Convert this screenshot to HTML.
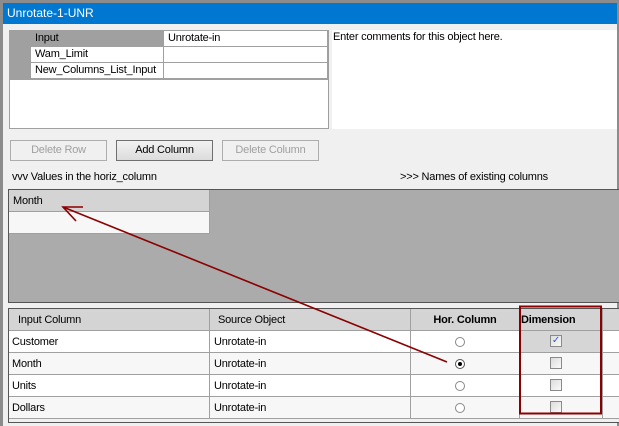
<!DOCTYPE html>
<html><head><style>
*{margin:0;padding:0;box-sizing:border-box}
body{width:619px;height:426px;background:#f0f0f0;font-family:"Liberation Sans",sans-serif;font-size:11px;color:#000;position:relative;overflow:hidden;letter-spacing:-0.2px}
.a{position:absolute}
.btn{position:absolute;top:140px;height:21px;width:97px;border:1px solid #adadad;background:#f0f0f0;color:#a0a0a0;text-align:center;line-height:19px;font-size:11px}
.cell{position:absolute;border-right:1px solid #a0a0a0;border-bottom:1px solid #a0a0a0;padding-left:4px;line-height:22px;white-space:nowrap}
.radio{position:absolute;width:10px;height:10px;border-radius:50%;border:1px solid #888;background:#fff}
.chk{position:absolute;width:12px;height:12px;border:1px solid #8a8a8a;background:linear-gradient(135deg,#dcdcdc,#fafafa)}
</style></head><body>
<div class="a" style="left:0;top:0;width:619px;height:426px;border:3px solid #8c8c8c;border-bottom:none;border-right:2px solid #8c8c8c"></div>
<div class="a" style="left:3px;top:3px;width:614px;height:21px;background:#0078d2;color:#fff;font-size:12px;line-height:21px;padding-left:4px;letter-spacing:0">Unrotate-1-UNR</div>
<div class="a" style="left:9px;top:30px;width:320px;height:99px;background:#fff;border:1px solid #a0a0a0"></div>
<div class="a" style="left:10px;top:31px;width:21px;height:48px;background:#a0a0a0"></div>
<div class="cell" style="left:31px;top:31px;width:133px;height:16px;line-height:15px;background:#a0a0a0">Input</div>
<div class="cell" style="left:164px;top:31px;width:164px;height:16px;line-height:15px;background:#fff">Unrotate-in</div>
<div class="cell" style="left:31px;top:47px;width:133px;height:16px;line-height:15px;background:#fff">Wam_Limit</div>
<div class="cell" style="left:164px;top:47px;width:164px;height:16px;background:#fff"></div>
<div class="cell" style="left:31px;top:63px;width:133px;height:16px;line-height:15px;background:#fff">New_Columns_List_Input</div>
<div class="cell" style="left:164px;top:63px;width:164px;height:16px;background:#fff"></div>
<div class="a" style="left:10px;top:79px;width:318px;height:1px;background:#a0a0a0"></div>
<div class="a" style="left:332px;top:30px;width:285px;height:99px;background:#fff;padding:1px 0 0 1px">Enter comments for this object here.</div>
<div class="btn" style="left:10px">Delete Row</div>
<div class="btn" style="left:116px;color:#000;border-color:#707070;background:linear-gradient(#f2f2f2,#dcdcdc)">Add Column</div>
<div class="btn" style="left:222px">Delete Column</div>
<div class="a" style="left:12px;top:171px">vvv Values in the horiz_column</div>
<div class="a" style="left:400px;top:171px">&gt;&gt;&gt; Names of existing columns</div>
<div class="a" style="left:8px;top:189px;width:611px;height:114px;background:#ababab;border:1px solid #555;border-right:none"></div>
<div class="cell" style="left:9px;top:190px;width:201px;height:22px;background:#d4d4d4">Month</div>
<div class="cell" style="left:9px;top:212px;width:201px;height:22px;background:#f7f7f7"></div>
<div class="a" style="left:8px;top:308px;width:611px;height:115px;background:#f0f0f0;border:1px solid #555;border-right:none"></div>
<div class="cell" style="left:9px;top:309px;width:201px;height:22px;background:#d4d4d4;padding-left:9px">Input Column</div>
<div class="cell" style="left:210px;top:309px;width:201px;height:22px;background:#d4d4d4;padding-left:8px">Source Object</div>
<div class="cell" style="left:411px;top:309px;width:109px;height:22px;background:#d4d4d4;font-weight:bold;text-align:center;padding:0">Hor. Column</div>
<div class="cell" style="left:520px;top:309px;width:83px;height:22px;background:#d4d4d4;font-weight:bold;padding-left:1px">Dimension</div>
<div class="cell" style="left:603px;top:309px;width:16px;height:22px;background:#d4d4d4;border-right:none"></div>

<div class="cell" style="left:9px;top:331px;width:201px;height:22px;background:#fff;padding-left:3px">Customer</div>
<div class="cell" style="left:210px;top:331px;width:201px;height:22px;background:#fff">Unrotate-in</div>
<div class="cell" style="left:411px;top:331px;width:109px;height:22px;background:#fff"></div>
<div class="cell" style="left:520px;top:331px;width:83px;height:22px;background:#d6d6d6"></div>
<div class="cell" style="left:603px;top:331px;width:16px;height:22px;background:#fff;border-right:none"></div>

<div class="cell" style="left:9px;top:353px;width:201px;height:22px;background:#f7f7f7;padding-left:3px">Month</div>
<div class="cell" style="left:210px;top:353px;width:201px;height:22px;background:#f7f7f7">Unrotate-in</div>
<div class="cell" style="left:411px;top:353px;width:109px;height:22px;background:#f7f7f7"></div>
<div class="cell" style="left:520px;top:353px;width:83px;height:22px;background:#f7f7f7"></div>
<div class="cell" style="left:603px;top:353px;width:16px;height:22px;background:#f7f7f7;border-right:none"></div>

<div class="cell" style="left:9px;top:375px;width:201px;height:22px;background:#fff;padding-left:3px">Units</div>
<div class="cell" style="left:210px;top:375px;width:201px;height:22px;background:#fff">Unrotate-in</div>
<div class="cell" style="left:411px;top:375px;width:109px;height:22px;background:#fff"></div>
<div class="cell" style="left:520px;top:375px;width:83px;height:22px;background:#fff"></div>
<div class="cell" style="left:603px;top:375px;width:16px;height:22px;background:#fff;border-right:none"></div>

<div class="cell" style="left:9px;top:397px;width:201px;height:22px;background:#f7f7f7;padding-left:3px">Dollars</div>
<div class="cell" style="left:210px;top:397px;width:201px;height:22px;background:#f7f7f7">Unrotate-in</div>
<div class="cell" style="left:411px;top:397px;width:109px;height:22px;background:#f7f7f7"></div>
<div class="cell" style="left:520px;top:397px;width:83px;height:22px;background:#f7f7f7"></div>
<div class="cell" style="left:603px;top:397px;width:16px;height:22px;background:#f7f7f7;border-right:none"></div>

<div class="radio" style="left:455px;top:337px"></div>
<div class="radio" style="left:455px;top:359px;border-color:#555"><div style="position:absolute;left:2px;top:2px;width:4px;height:4px;border-radius:50%;background:#000"></div></div>
<div class="radio" style="left:455px;top:381px"></div>
<div class="radio" style="left:455px;top:403px"></div>
<div class="chk" style="left:550px;top:335px;color:#3a5fcd;font-size:10px;line-height:10px;text-align:center">✓</div>
<div class="chk" style="left:550px;top:357px"></div>
<div class="chk" style="left:550px;top:379px"></div>
<div class="chk" style="left:550px;top:401px"></div>

<svg class="a" style="left:0;top:0" width="619" height="426">
<rect x="520" y="306.5" width="81" height="107" fill="none" stroke="#8b0000" stroke-width="2"/>
<line x1="447" y1="362" x2="63" y2="207" stroke="#8b0000" stroke-width="1.6"/>
<polyline points="83,207 63,207 76,221" fill="none" stroke="#8b0000" stroke-width="1.6"/>
</svg>
</body></html>
